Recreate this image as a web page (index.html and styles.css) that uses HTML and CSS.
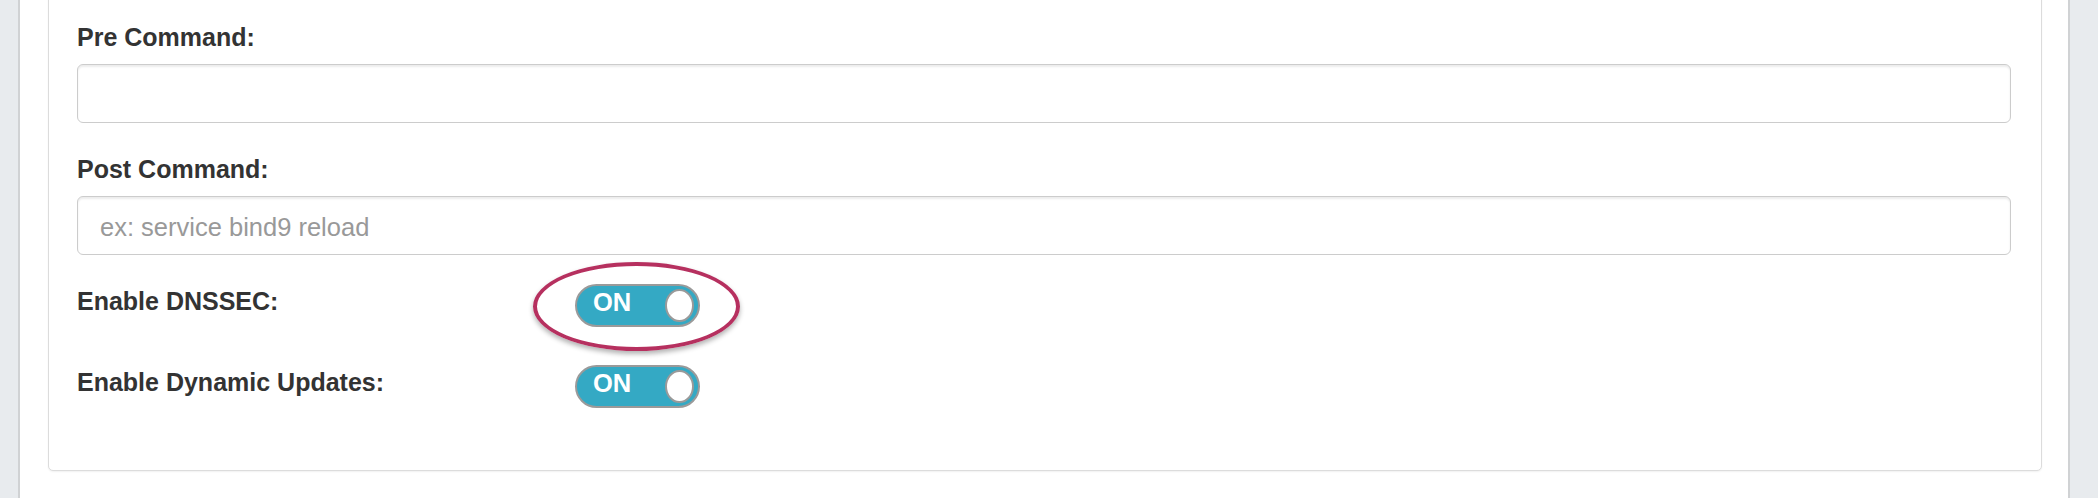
FILE: index.html
```html
<!DOCTYPE html>
<html lang="en">
<head>
<meta charset="utf-8">
<title>Zone settings</title>
<link rel="stylesheet" href="styles.css">
</head>
<body>
<div class="page">
  <div class="content">
    <div class="panel">
      <div class="form-group">
        <label class="control-label">Pre Command:</label>
        <input class="form-control" type="text">
      </div>
      <div class="form-group">
        <label class="control-label">Post Command:</label>
        <input class="form-control" type="text" placeholder="ex: service bind9 reload">
      </div>
      <div class="switch-row">
        <div class="switch-label">Enable DNSSEC:</div>
        <div class="switch-wrap">
          <div class="switch"><span class="switch-text">ON</span><span class="knob"></span></div>
          <span class="annotation"></span>
        </div>
      </div>
      <div class="switch-row">
        <div class="switch-label">Enable Dynamic Updates:</div>
        <div class="switch-wrap">
          <div class="switch"><span class="switch-text">ON</span><span class="knob"></span></div>
        </div>
      </div>
    </div>
  </div>
</div>
</body>
</html>
```
FILE: styles.css
```css
html, body {
  margin: 0;
  height: 498px;
  overflow: hidden;
  background: #e8ebee;
  font-family: "Liberation Sans", Arial, sans-serif;
  color: #333;
}

.page {
  height: 498px;
  padding: 0 28px 0 18px;
  box-sizing: border-box;
}

.content {
  display: flow-root;
  height: 498px;
  box-sizing: border-box;
  background: #fff;
  border-left: 2px solid #d0d2d4;
  border-right: 2px solid #d0d2d4;
  padding: 0 26px 0 28px;
}

.panel {
  margin-top: -10px;
  padding: 29px 30px 62px 28px;
  border: 1px solid #dcdcdc;
  border-radius: 5px;
  background: #fff;
  box-shadow: 0 1px 2px rgba(0, 0, 0, 0.06);
}

.form-group {
  margin-bottom: 29px;
}

.control-label {
  display: block;
  font-weight: bold;
  font-size: 25px;
  line-height: 35px;
  margin-bottom: 9px;
  color: #333;
}

.form-control {
  display: block;
  width: 100%;
  height: 59px;
  box-sizing: border-box;
  margin: 0;
  padding: 3px 22px 0 22px;
  border: 1px solid #cccccc;
  border-radius: 6px;
  box-shadow: inset 0 2px 2px rgba(0, 0, 0, 0.075);
  background: #fff;
  font-family: "Liberation Sans", Arial, sans-serif;
  font-size: 25.5px;
  color: #555;
  outline: none;
}

.form-control::placeholder {
  color: #999;
}

.switch-row {
  display: grid;
  grid-template-columns: 498px auto;
  align-items: start;
  margin-bottom: 38px;
}

.switch-row:last-child {
  margin-bottom: 0;
}

.switch-label {
  font-weight: bold;
  font-size: 25px;
  line-height: 35px;
  color: #333;
}

.switch-wrap {
  position: relative;
  width: 125px;
  height: 43px;
}

.switch {
  width: 125px;
  height: 43px;
  box-sizing: border-box;
  border: 2px solid #9a9a9a;
  border-radius: 22px;
  background: #34a9c4;
  display: flex;
  align-items: center;
  justify-content: space-between;
  padding: 0 4px 0 16px;
}

.switch-text {
  color: #fff;
  font-weight: bold;
  font-size: 25.5px;
  line-height: 1;
  margin-bottom: 6px;
}

.knob {
  width: 29px;
  height: 33px;
  box-sizing: border-box;
  border: 2px solid #9a9a9a;
  border-radius: 50%;
  background: #fff;
}

.annotation {
  position: absolute;
  left: -42px;
  top: -22px;
  width: 207px;
  height: 89px;
  box-sizing: border-box;
  border: 4px solid #b6305f;
  border-radius: 50%;
  box-shadow: 0 3px 5px rgba(0, 0, 0, 0.3);
  pointer-events: none;
}
```
